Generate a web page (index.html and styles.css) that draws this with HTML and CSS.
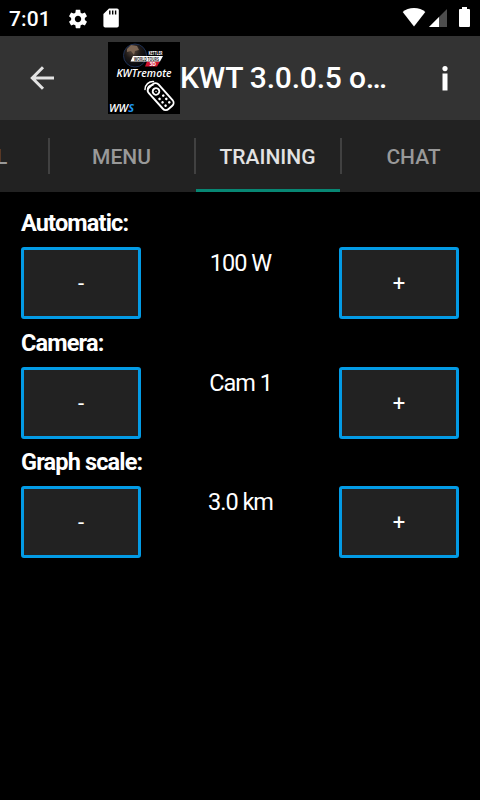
FILE: index.html
```html
<!DOCTYPE html>
<html lang="en">
<head>
    <meta charset="UTF-8">
    <meta name="viewport" content="width=device-width, initial-scale=1.0">
    <title>KWT Remote</title>
    <link rel="stylesheet" href="styles.css">
</head>
<body>

    <!-- Status bar -->
    <div class="status-bar">
        <span class="clock">7:01</span>
        <svg class="gear" width="22" height="22" viewBox="0 0 24 24"><path fill="#fff" d="M19.43 12.98c.04-.32.07-.64.07-.98s-.03-.66-.07-.98l2.11-1.65c.19-.15.24-.42.12-.64l-2-3.46c-.12-.22-.39-.3-.61-.22l-2.49 1c-.52-.4-1.08-.73-1.69-.98l-.38-2.65C14.46 2.18 14.25 2 14 2h-4c-.25 0-.46.18-.49.42l-.38 2.65c-.61.25-1.17.59-1.69.98l-2.49-1c-.23-.09-.49 0-.61.22l-2 3.46c-.13.22-.07.49.12.64l2.11 1.65c-.04.32-.07.65-.07.98s.03.66.07.98l-2.11 1.65c-.19.15-.24.42-.12.64l2 3.46c.12.22.39.3.61.22l2.49-1c.52.4 1.08.73 1.69.98l.38 2.65c.03.24.24.42.49.42h4c.25 0 .46-.18.49-.42l.38-2.65c.61-.25 1.17-.59 1.69-.98l2.49 1c.23.09.49 0 .61-.22l2-3.46c.12-.22.07-.49-.12-.64l-2.11-1.65zM12 15.5c-1.93 0-3.5-1.57-3.5-3.5s1.57-3.5 3.5-3.5 3.5 1.57 3.5 3.5-1.57 3.5-3.5 3.5z"/></svg>
        <svg class="sd-card" width="16" height="20" viewBox="0 0 16 20"><path fill="#fff" d="M6 .5h8a1.8 1.8 0 0 1 1.8 1.8v15.4A1.8 1.8 0 0 1 14 19.5H2.2A1.8 1.8 0 0 1 .4 17.700V6z"/><path stroke="#000" stroke-width="1.4" d="M6.800 2.500v4M9.700 2.500v4M12.600 2.500v4"/></svg>
        <svg class="wifi" width="24" height="20" viewBox="0 0 24 20"><path fill="#fff" d="M12 19.500.7 5C3.500 2.500 7.500 1 12 1s8.500 1.500 11.300 4z"/></svg>
        <svg class="signal" width="18" height="18" viewBox="0 0 18 18"><path fill="#4d4d4d" d="M18 0v18H0z"/><path fill="#fff" d="M10 8v10H0z"/></svg>
        <svg class="battery" width="11" height="20" viewBox="0 0 11 20"><path fill="#fff" d="M3 0h5v2h2a1 1 0 0 1 1 1v16a1 1 0 0 1-1 1H1a1 1 0 0 1-1-1V3a1 1 0 0 1 1-1h2z"/></svg>
    </div>

    <!-- Action bar -->
    <header class="action-bar">
        <svg class="back" width="24" height="24" viewBox="0 0 24 24"><path fill="none" stroke="#e3e3e3" stroke-width="3" d="M24 12H3M13 1.300 2.300 12 13 22.700"/></svg>
        <svg class="logo" width="72" height="72" viewBox="0 0 72 72">
            <defs>
                <radialGradient id="globe" cx=".4" cy=".3" r=".7">
                    <stop offset="0" stop-color="#5b4a3e"/>
                    <stop offset=".5" stop-color="#1c1817"/>
                    <stop offset="1" stop-color="#03070f"/>
                </radialGradient>
            </defs>
            <rect width="72" height="72" fill="#000"/>
            <circle cx="27" cy="13.500" r="11.500" fill="url(#globe)" stroke="#1d2f52"/>
            <path fill="#7d6654" d="M19 7l4-4 6 1 2 4-4 1-1 4-3-4-4 1z"/>
            <path fill="#d3122d" d="M39 19.500h13L49 24.500H37z"/>
            <path fill="#fff" d="M25 14h30l-3 5.500H22.500z"/>
            <text x="40.500" y="13.300" class="logo-brand" textLength="14" lengthAdjust="spacingAndGlyphs">KETTLER</text>
            <text x="26" y="18.500" class="logo-tours" textLength="25" lengthAdjust="spacingAndGlyphs">WORLD TOURS</text>
            <text x="41.500" y="24" class="logo-3d">3D</text>
            <text x="8.500" y="35.200" class="logo-name" textLength="55" lengthAdjust="spacingAndGlyphs">KWTremote</text>
            <!-- Remote control -->
            <g transform="translate(52.700 54.600) rotate(-42)" fill="none" stroke="#fff" stroke-width="1.900">
                <rect x="-6.500" y="-14.500" width="13" height="29" rx="4"/>
                <circle cx="0" cy="-7" r="3.300"/>
                <circle cx="0" cy="-7" r=".7" fill="#fff" stroke="none"/>
                <path stroke-width="2.500" stroke-linecap="round" d="M-2.500 1h.1M2.500 1h.1M-2.500 5.500h.1M2.500 5.500h.1M-2.500 10h.1M2.500 10h.1"/>
            </g>
            <path fill="none" stroke="#fff" stroke-width="1.500" stroke-linecap="round" d="M37 47.500a8 8 0 0 1 8.500-8M39.500 49a5 5 0 0 1 5.500-6"/>
            <text x="1" y="70" class="logo-wws" textLength="25" lengthAdjust="spacingAndGlyphs">WW<tspan class="logo-s">S</tspan></text>
        </svg>
        <h1 class="title">KWT 3.0.0.5 o…</h1>
        <svg class="info" width="6" height="25" viewBox="0 0 6 25"><circle cx="3" cy="2.600" r="2.600" fill="#fff"/><path fill="#fff" d="M.5 7.500h5v17h-5z"/></svg>
    </header>

    <!-- Tabs -->
    <nav class="tabs">
        <a class="tab tab-cut">L</a>
        <a class="tab">MENU</a>
        <a class="tab active">TRAINING</a>
        <a class="tab">CHAT</a>
    </nav>

    <!-- Training settings -->
    <main class="content">
        <section class="setting">
            <h2>Automatic:</h2>
            <div class="row">
                <button>-</button>
                <span class="value">100 W</span>
                <button>+</button>
            </div>
        </section>
        <section class="setting">
            <h2>Camera:</h2>
            <div class="row">
                <button>-</button>
                <span class="value">Cam 1</span>
                <button>+</button>
            </div>
        </section>
        <section class="setting last">
            <h2>Graph scale:</h2>
            <div class="row">
                <button>-</button>
                <span class="value">3.0 km</span>
                <button>+</button>
            </div>
        </section>
    </main>

</body>
</html>
```
FILE: styles.css
```css
* {
    box-sizing: border-box;
}

body {
    margin: 0;
    height: 800px;
    overflow: hidden;
    background-color: #000;
    color: #fff;
    font-family: Roboto, sans-serif;
}

.status-bar {
    display: flex;
    align-items: flex-start;
    height: 36px;
    padding: 8px 10px 0 9px;
}

.clock {
    width: 58px;
    font-size: 21px;
    font-weight: 500;
    line-height: 22px;
    letter-spacing: 0.1px;
}

.gear {
    margin-right: 14px;
}

.wifi {
    margin-left: auto;
    margin-right: 3px;
    margin-top: -1px;
}

.signal {
    margin-top: 1px;
    margin-right: 12px;
}

.battery {
    margin-top: -1px;
}

.action-bar {
    display: flex;
    align-items: center;
    height: 84px;
    padding: 0 32px 0 30px;
    background-color: #333;
}

.logo {
    margin-left: 54px;
}

.logo-brand,
.logo-tours,
.logo-3d {
    font-family: "Open Sans", sans-serif;
    font-weight: 700;
    font-size: 4.5px;
    fill: #fff;
}

.logo-tours {
    fill: #222;
}

.logo-3d {
    font-size: 5px;
}

.logo-name,
.logo-wws {
    font-family: "Open Sans", sans-serif;
    font-style: italic;
    font-weight: 600;
    font-size: 10px;
    fill: #fff;
}

.logo-s {
    font-weight: 700;
    fill: #1e96f0;
}

.title {
    margin: 0;
    font-size: 30px;
    font-weight: 500;
    line-height: 36px;
    letter-spacing: -0.2px;
    white-space: nowrap;
}

.info {
    margin-left: auto;
}

.tabs {
    display: flex;
    height: 72px;
    background-color: #222;
}

.tab {
    display: flex;
    flex: none;
    align-items: center;
    justify-content: center;
    width: 146px;
    padding-top: 2px;
    padding-right: 3px;
    color: #999;
    font-size: 21px;
    font-weight: 500;
    background: linear-gradient(#414141, #414141) no-repeat right 18px / 2px 36px;
}

.tab-cut {
    width: 50px;
    justify-content: flex-start;
    text-indent: -4px;
}

.tab.active {
    color: #e3e3e3;
    background: linear-gradient(#414141, #414141) no-repeat right 18px / 2px 36px,
        linear-gradient(#078673, #078673) no-repeat left bottom / 144px 3px;
}

.content {
    padding: 15px 21px;
}

.setting {
    height: 120px;
}

.setting h2 {
    margin: 0;
    height: 40px;
    font-size: 23.5px;
    line-height: 32px;
    letter-spacing: -0.85px;
}

.row {
    display: flex;
    justify-content: space-between;
}

.row button {
    width: 120px;
    height: 72px;
    padding: 0;
    border: 3px solid #039be5;
    border-radius: 3px;
    background-color: #222;
    color: #fff;
    font-family: inherit;
    font-size: 22px;
}

.value {
    padding-left: 1px;
    font-size: 23.5px;
    line-height: 32px;
    letter-spacing: -1px;
}

.last {
    margin-top: -1px;
}
```
